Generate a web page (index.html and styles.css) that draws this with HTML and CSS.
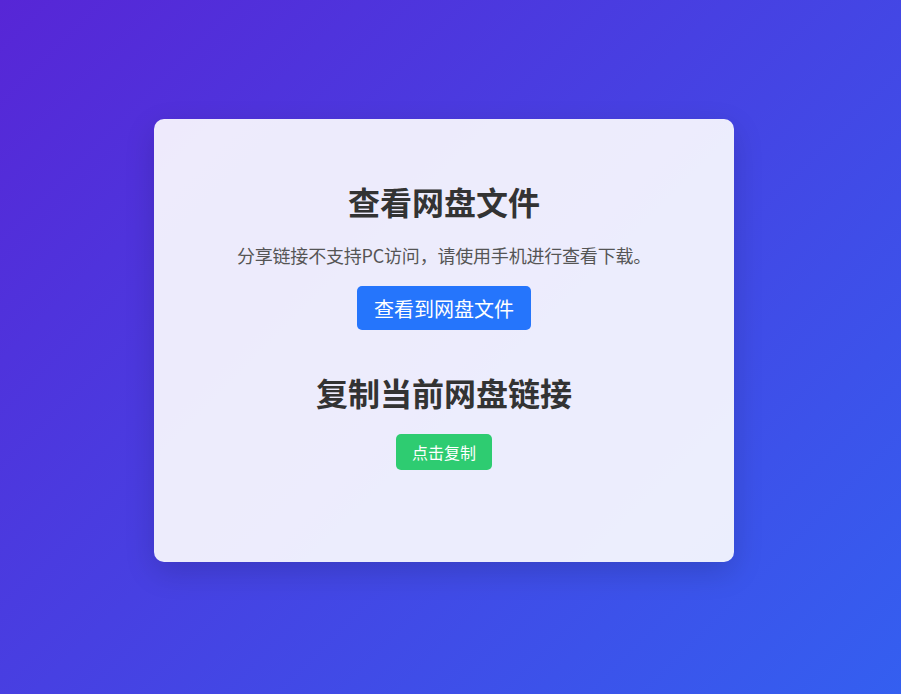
FILE: index.html
```html
<!DOCTYPE html>
<html lang="zh-CN">
<head>
<meta charset="utf-8">
<title>查看网盘文件</title>
<link rel="stylesheet" href="styles.css">
</head>
<body>
<div class="page">
  <div class="card">
    <h1 class="title">查看网盘文件</h1>
    <p class="desc">分享链接不支持PC访问，请使用手机进行查看下载。</p>
    <button class="btn btn-blue">查看到网盘文件</button>
    <h1 class="title title-2">复制当前网盘链接</h1>
    <button class="btn btn-green">点击复制</button>
  </div>
</div>
</body>
</html>
```

FILE: styles.css
```css
* { box-sizing: border-box; }
html, body {
  margin: 0;
  padding: 0;
  height: 100%;
}
body {
  background: linear-gradient(135deg, #5726d6 0%, #345ff0 100%);
  font-family: "Microsoft YaHei", "Noto Sans CJK SC", "Noto Sans", sans-serif;
  color: #333;
  overflow: hidden;
}
.page {
  width: 901px;
  height: 694px;
  padding: 0 13px 13px 0;
  display: flex;
  align-items: center;
  justify-content: center;
}
.card {
  width: 580px;
  height: 443px;
  background: rgba(255, 255, 255, 0.9);
  border-radius: 10px;
  box-shadow: 0 10px 30px rgba(0, 0, 0, 0.15);
  padding-top: 59px;
  display: flex;
  flex-direction: column;
  align-items: center;
}
.title {
  margin: 0;
  font-size: 32px;
  line-height: 46px;
  font-weight: 700;
  color: #333;
}
.title-2 {
  margin-top: 39px;
}
.desc {
  margin: 18px 0 0;
  font-size: 18px;
  line-height: 26px;
  letter-spacing: -0.2px;
  color: #555;
}
.btn {
  border: none;
  font-family: inherit;
  color: #fff;
  border-radius: 5px;
  cursor: pointer;
}
.btn-blue {
  margin-top: 18px;
  background: #2575fc;
  font-size: 20px;
  height: 44px;
  width: 174px;
  padding: 0;
}
.btn-green {
  margin-top: 19px;
  background: #2ecc71;
  font-size: 16px;
  height: 36px;
  width: 96px;
  padding: 0;
}
```
